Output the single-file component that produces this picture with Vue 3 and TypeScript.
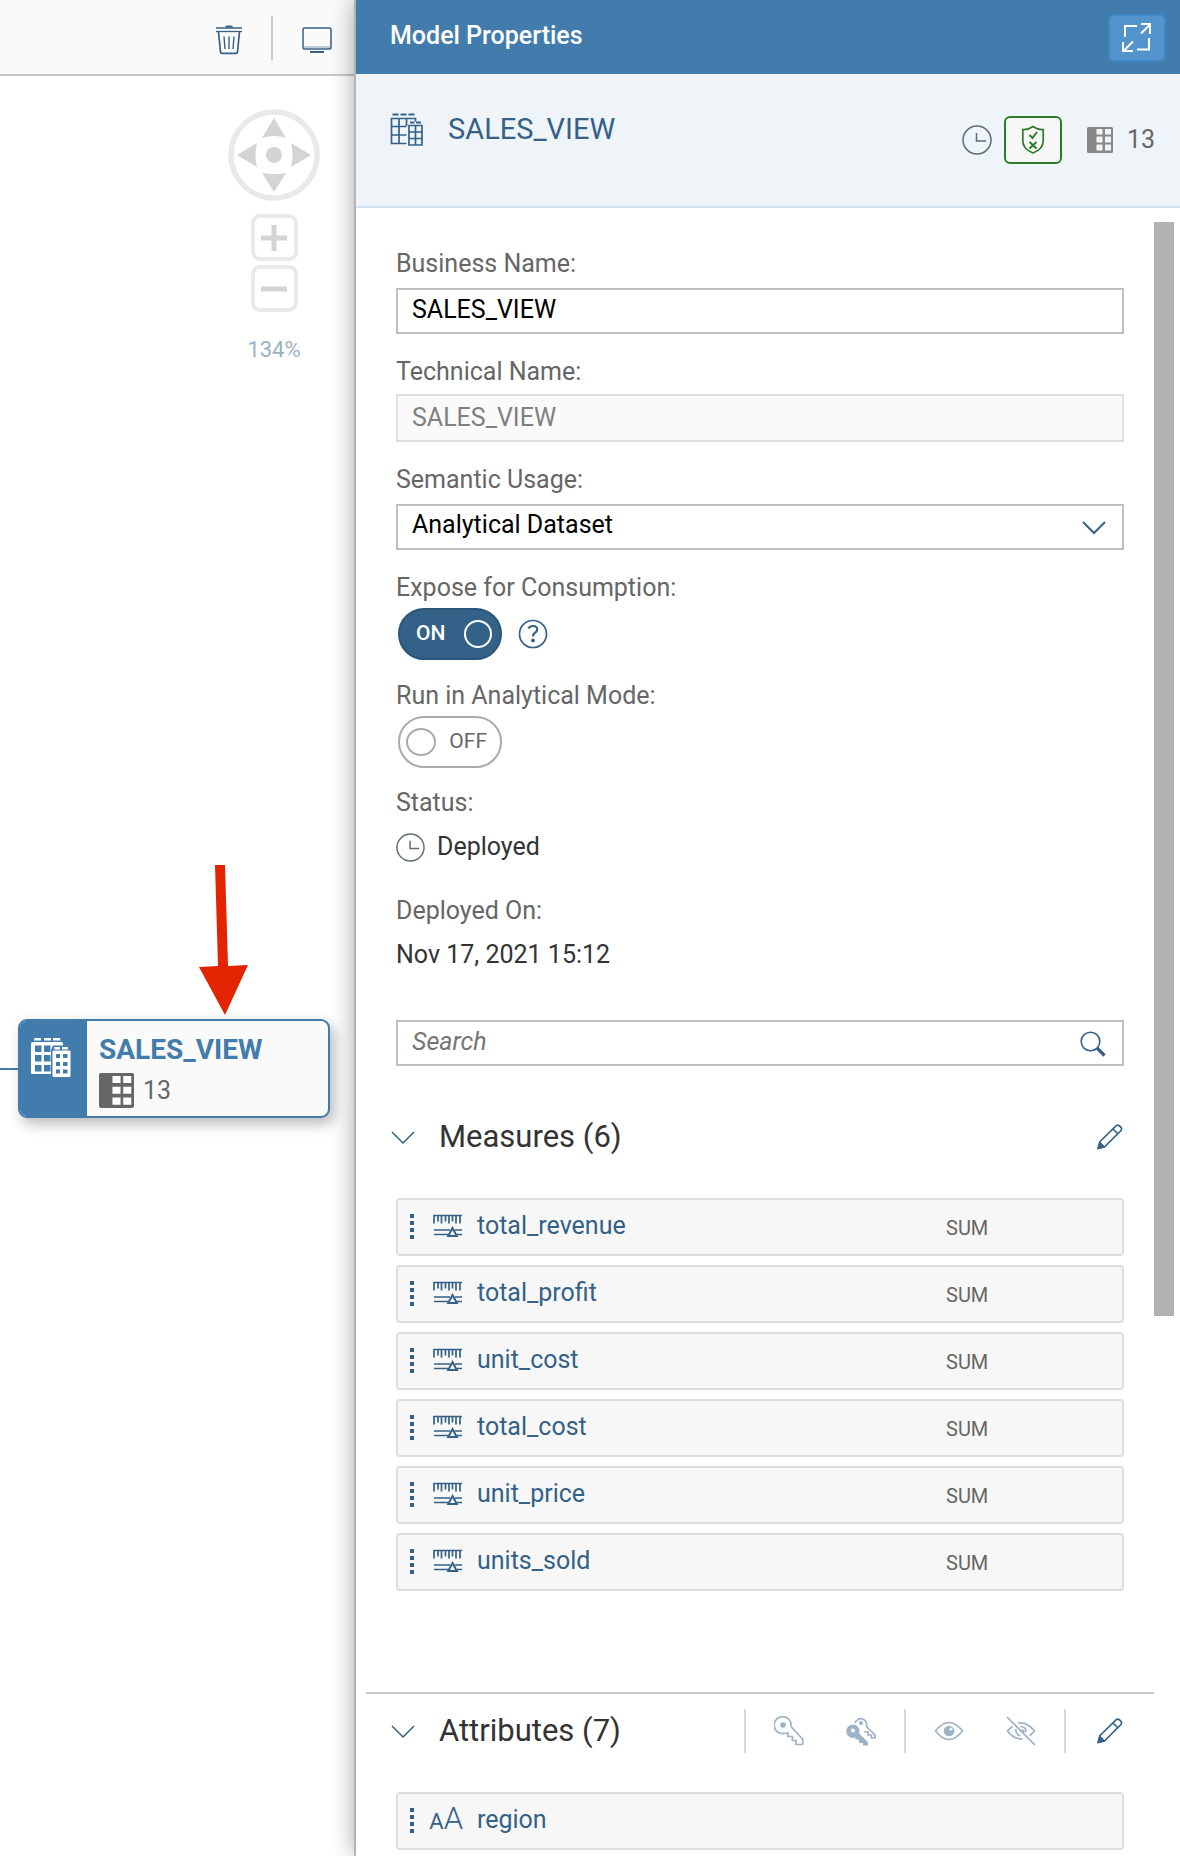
<script setup lang="ts">
import { ref } from 'vue'

interface Measure {
  name: string
  aggregation: string
}

const businessName = ref('SALES_VIEW')
const technicalName = 'SALES_VIEW'
const semanticUsage = ref('Analytical Dataset')
const exposed = ref(true)
const analyticalMode = ref(false)
const query = ref('')
const columnCount = 13

const measures: Measure[] = [
  { name: 'total_revenue', aggregation: 'SUM' },
  { name: 'total_profit', aggregation: 'SUM' },
  { name: 'unit_cost', aggregation: 'SUM' },
  { name: 'total_cost', aggregation: 'SUM' },
  { name: 'unit_price', aggregation: 'SUM' },
  { name: 'units_sold', aggregation: 'SUM' },
]

const attributes: string[] = ['region']
</script>

<template>
  <div class="app">
    <section class="workspace">
      <div class="toolbar">
        <button class="icon-btn" type="button" aria-label="Delete">
          <svg width="26" height="30" viewBox="0 0 26 30" fill="none" stroke="currentColor" stroke-width="1.4">
            <path d="M0 3h26" stroke-width="1.5" />
            <path d="M0 6.500h26" stroke-width="1.300" />
            <path d="M9 2.500q0-2 2-2h4q2 0 2 2z" fill="currentColor" stroke="none" />
            <path d="M2.500 7l2 20q.2 1.300 1.500 1.300h14q1.300 0 1.500-1.300l2-20" stroke-width="1.700" />
            <path d="M8 11.500l1 12.500M13 11.500V24M18 11.500l-1 12.500" />
          </svg>
        </button>
        <span class="toolbar-sep"></span>
        <button class="icon-btn" type="button" aria-label="Preview data">
          <svg width="30" height="28" viewBox="0 0 30 28" fill="none" stroke="currentColor" stroke-width="1.5">
            <rect x="1" y="2" width="28" height="21" rx="1.500" />
            <path d="M2 21h26" stroke-width="1" opacity=".6" />
            <path d="M8 26h14" stroke-width="2" />
          </svg>
        </button>
      </div>

      <div class="canvas">
        <div class="navigator">
          <svg width="92" height="92" viewBox="-46 -46 92 92" aria-label="Pan">
            <circle r="43" fill="none" stroke="#e9e9e9" stroke-width="5.500" />
            <g fill="#d4d4d4">
              <circle r="8" />
              <path d="M0-37L12-17Q0-21-12-17z" />
              <path d="M0 37L12 18Q0 20-12 18z" />
              <path d="M-37 0L-17-12Q-20 0-17 12z" />
              <path d="M37 0L17-12Q20 0 17 12z" />
            </g>
          </svg>
          <div class="zoom-buttons">
            <button class="zoom-btn" type="button" aria-label="Zoom in">
              <svg width="28" height="28" viewBox="0 0 28 28" stroke="#d4d4d4" stroke-width="5"><path d="M1 14h26M14 1v26" /></svg>
            </button>
            <button class="zoom-btn" type="button" aria-label="Zoom out">
              <svg width="28" height="28" viewBox="0 0 28 28" stroke="#d4d4d4" stroke-width="5"><path d="M1 14h26" /></svg>
            </button>
          </div>
          <span class="zoom-level">134%</span>
        </div>

        <svg class="pointer" width="52" height="154" viewBox="0 0 52 154" fill="#e32400">
          <path d="M18 1h10l3 101 20-1-23 50L2 103l19-1z" />
        </svg>
        <span class="edge"></span>
        <article class="node">
          <div class="node-badge">
            <svg width="40" height="41" viewBox="0 0 40 41">
              <g fill="#fff">
                <path d="M3.500 1h6.500v2.500H3M13 1h7v2.500h-7M22 1h7l.5 2.500H22" />
                <rect y="5" width="32" height="32" rx="1.500" />
              </g>
              <path d="M4 8.500h6.500V15H4zM13 8.500h6.500V15H13zM4 18h6.500v6.500H4zM13 18h6.500v6.500H13zM4 28h6.500v6.500H4zM13 28h6.500v6.500H13z" fill="#427cac" />
              <path d="M20 40V13l2-4.500h16V13H41v28H20z" fill="#427cac" />
              <path d="M23.500 10.500h5V12h-5M31 10.500h5.500V12H31" stroke="#fff" fill="#fff" />
              <rect x="21.500" y="13.500" width="18" height="26.500" rx="1" fill="#fff" />
              <path d="M25 17h4v4h-4zM32 17h4.500v4H32zM25 25h4v4h-4zM32 25h4.500v4H32zM25 32.500h4v4h-4zM32 32.500h4.500v4H32z" fill="#427cac" />
            </svg>
          </div>
          <div class="node-body">
            <h2 class="node-title">SALES_VIEW</h2>
            <div class="node-count">
              <svg width="35" height="35" viewBox="0 0 26 26">
                <rect width="26" height="26" rx="1.500" fill="#666" />
                <path d="M10 2.300h6v5.200h-6zM18 2.300h6v5.200h-6zM10 10.200h6v5.300h-6zM18 10.200h6v5.300h-6zM10 18.200h6v5.300h-6zM18 18.200h6v5.300h-6z" fill="#fff" />
              </svg>
              <span>{{ columnCount }}</span>
            </div>
          </div>
        </article>
      </div>
    </section>

    <aside class="panel">
      <header class="panel-header">
        <h1>Model Properties</h1>
        <button class="expand-btn" type="button" aria-label="Expand panel">
          <svg width="30" height="30" viewBox="0 0 30 30" fill="none" stroke="#fff" stroke-width="2">
            <path d="M3 14V3h12M27 15v11.500H15M19 1h9v10M28 1.500L19 10.500M1 19v9h10M1.500 28L11 18.500" />
          </svg>
        </button>
      </header>

      <div class="object-header">
        <div class="object-name">
          <svg width="34" height="34" viewBox="0 0 34 34" fill="none" stroke="currentColor" stroke-width="1.700">
            <path d="M2.500 1.500h6M10.500 1.500h6M18.500 1.500h6" stroke-width="2" />
            <path d="M16.500 30.500H1.500V5.500h24v3M1.500 13.500h15M1.500 22h15M9 5.500v25M16.500 5.500V13" />
            <path d="M20 9.500h4.500M26 9.500h5" stroke-width="2" />
            <path d="M19 12.500h13V32H19zM19 19h13M19 25.500h13M25.500 12.500V32" />
          </svg>
          <h2>SALES_VIEW</h2>
        </div>
        <div class="object-status">
          <svg class="clock" width="30" height="30" viewBox="0 0 30 30" fill="none" stroke="currentColor" stroke-width="1.500">
            <circle cx="15" cy="15" r="14" /><path d="M14.500 8v8H24" />
          </svg>
          <button class="validate-btn" type="button" aria-label="Validation status">
            <svg width="24" height="30" viewBox="0 0 24 30" fill="none" stroke="currentColor" stroke-width="1.700">
              <path d="M12 1.500Q7 5 1.800 4.500V16q0 8 10.200 12 10.200-4 10.200-12V4.500Q17 5 12 1.500z" />
              <path d="M8.500 10l3 3 4.500-6M8.500 17l7 6.500M15.500 17l-7 6.500" stroke-width="2" />
            </svg>
          </button>
          <svg width="26" height="26" viewBox="0 0 26 26">
            <rect width="26" height="26" rx="1.500" fill="#888" />
            <path d="M9.500 2h6v5.500h-6zM18 2h6v5.500h-6zM9.500 9.500h6v6h-6zM18 9.500h6v6h-6zM9.500 17.500h6v6h-6zM18 17.500h6v6h-6z" fill="#eff4f9" />
          </svg>
          <span class="column-count">{{ columnCount }}</span>
        </div>
      </div>

      <div class="panel-body">
        <div class="content">
          <form class="form" @submit.prevent>
            <div class="field">
              <label for="business-name">Business Name:</label>
              <div class="control"><input id="business-name" v-model="businessName" class="text-input" type="text" /></div>
            </div>
            <div class="field">
              <label for="technical-name">Technical Name:</label>
              <div class="control"><input id="technical-name" class="text-input" type="text" :value="technicalName" disabled /></div>
            </div>
            <div class="field">
              <label for="semantic-usage">Semantic Usage:</label>
              <div class="control select-wrap">
                <select id="semantic-usage" v-model="semanticUsage" class="text-input">
                  <option>Analytical Dataset</option>
                  <option>Relational Dataset</option>
                </select>
                <svg class="field-icon" width="24" height="14" viewBox="0 0 24 14" fill="none" stroke="currentColor" stroke-width="2"><path d="M1 1l11 11L23 1" /></svg>
              </div>
            </div>
            <div class="field">
              <label for="expose">Expose for Consumption:</label>
              <div class="control toggles">
                <span class="switch on">
                  <input id="expose" v-model="exposed" type="checkbox" role="switch" />
                  <span>ON</span><i class="knob"></i>
                </span>
                <button class="icon-btn" type="button" aria-label="Help">
                  <svg width="30" height="30" viewBox="0 0 30 30" fill="none" stroke="currentColor">
                    <circle cx="15" cy="15" r="13.500" stroke-width="1.700" />
                    <path d="M10.300 9.500q1.500-2.500 4.700-2.500 4.200 0 4.200 3.500 0 2-2.500 3.500-1.700 1-1.700 3.500" stroke-width="2.200" />
                    <circle cx="15" cy="21.500" r="1.500" fill="currentColor" />
                  </svg>
                </button>
              </div>
            </div>
            <div class="field">
              <label for="analytical-mode">Run in Analytical Mode:</label>
              <div class="control toggles">
                <span class="switch off">
                  <input id="analytical-mode" v-model="analyticalMode" type="checkbox" role="switch" />
                  <i class="knob"></i><span>OFF</span>
                </span>
              </div>
            </div>
            <div class="field">
              <span class="caption">Status:</span>
              <div class="value">
                <svg class="clock" width="29" height="29" viewBox="0 0 30 30" fill="none" stroke="currentColor" stroke-width="1.500">
                  <circle cx="15" cy="15" r="14" /><path d="M14.500 8v8H24" />
                </svg>
                <span>Deployed</span>
              </div>
            </div>
            <div class="field">
              <span class="caption">Deployed On:</span>
              <div class="value">Nov 17, 2021 15:12</div>
            </div>
            <div class="search">
              <input v-model="query" class="text-input" type="search" placeholder="Search" aria-label="Search" />
              <svg class="field-icon" width="26" height="26" viewBox="0 0 26 26" fill="none" stroke="currentColor">
                <circle cx="10.500" cy="10.500" r="9.300" stroke-width="1.600" /><path d="M17 17l7.500 7.500" stroke-width="3.200" />
              </svg>
            </div>
          </form>

          <section class="group">
            <div class="group-header">
              <button class="collapse-btn" type="button" aria-label="Collapse measures">
                <svg width="24" height="14" viewBox="0 0 24 14" fill="none" stroke="currentColor" stroke-width="1.500"><path d="M1 1l11 11L23 1" /></svg>
              </button>
              <h3>Measures (6)</h3>
              <button class="icon-btn" type="button" aria-label="Edit measures">
                <svg width="28" height="28" viewBox="0 0 28 28" fill="none" stroke="currentColor" stroke-width="1.700">
                  <path d="M3.500 19L20.500 2.500q1.500-1 3 .3l1.500 1.500q1.200 1.500.2 3L8.500 24M17 6l5 5" /><path d="M3.500 18.500l5.500 5.700L1.500 26z" fill="currentColor" stroke-width="1" />
                </svg>
              </button>
            </div>
            <ul class="list">
              <li v-for="measure in measures" :key="measure.name" class="row">
                <span class="handle"></span>
                <svg class="row-icon" width="30" height="24" viewBox="0 0 30 24" fill="none" stroke="currentColor" stroke-width="1.700">
                  <path d="M1 9.500V1.500h28M5 1v6.500M8.500 1v8.500M12.500 1v6.500M16 1v8.500M19.500 1v6.500M23 1v8.500M27 1v8.500" />
                  <path d="M1 16h16M22 16h7M1 20.500h14.500M24 20.500h5" />
                  <path d="M19.500 14l4.300 8h-8.600z" stroke-width="2" />
                </svg>
                <a class="row-name" href="#">{{ measure.name }}</a>
                <span class="aggregation">{{ measure.aggregation }}</span>
              </li>
            </ul>
          </section>

          <section class="group ruled">
            <div class="group-header">
              <button class="collapse-btn" type="button" aria-label="Collapse attributes">
                <svg width="24" height="14" viewBox="0 0 24 14" fill="none" stroke="currentColor" stroke-width="1.500"><path d="M1 1l11 11L23 1" /></svg>
              </button>
              <h3>Attributes (7)</h3>
              <div class="actions">
                <span class="sep"></span>
                <button type="button" disabled aria-label="Set as key">
                  <svg width="30" height="30" viewBox="0 0 30 30" fill="none" stroke="currentColor" stroke-width="1.700">
                    <path d="M17 10.500L28 22.500q1.500 2 .5 6H22v-4h-3.500v-4H14V17l-4 .5a8.500 8.500 0 1 1 7-7" /><circle cx="9" cy="9" r="2.800" fill="currentColor" stroke="none" />
                  </svg>
                </button>
                <button type="button" disabled aria-label="Set compound key">
                  <svg width="30" height="30" viewBox="0 0 30 30" fill="none" stroke="currentColor" stroke-width="1.700">
                    <path d="M9 7a6 6 0 1 1 11.500 3.500l8 8q1 1.500.5 3.500h-3.500v-3H22v-3h-4" /><circle cx="15" cy="7" r="2" fill="currentColor" stroke="none" />
                    <path fill="currentColor" fill-rule="evenodd" stroke="none" d="M7 8.500a6.500 6.500 0 0 1 6 9l9 8.500v3.500h-5V27h-4v-3.500H9.500v-2L7 22a6.500 6.500 0 0 1 0-13.500zm0 4a2 2 0 1 0 0 4 2 2 0 0 0 0-4z" />
                  </svg>
                </button>
                <span class="sep"></span>
                <button type="button" disabled aria-label="Show">
                  <svg width="30" height="30" viewBox="0 0 30 30" fill="none" stroke="currentColor" stroke-width="1.700">
                    <path d="M1.500 15q13.500-17 27 0-13.500 17-27 0z" /><circle cx="15" cy="15" r="5.300" fill="currentColor" stroke="none" /><circle cx="17" cy="13" r="1.500" fill="#fff" stroke="none" />
                  </svg>
                </button>
                <button type="button" disabled aria-label="Hide">
                  <svg width="30" height="30" viewBox="0 0 30 30" fill="none" stroke="currentColor" stroke-width="1.700">
                    <path d="M1 1l28 28M6.500 10.500Q4 12 1.500 15q6.500 8.500 15 8M12 7q9-1.500 16.500 8-2.500 3-5 4.700M10 13q-1 5 4.500 7M14 10.500q6 0 6 5.500M16 13.500l2.500 3" />
                  </svg>
                </button>
                <span class="sep"></span>
              </div>
              <button class="icon-btn" type="button" aria-label="Edit attributes">
                <svg width="28" height="28" viewBox="0 0 28 28" fill="none" stroke="currentColor" stroke-width="1.700">
                  <path d="M3.500 19L20.500 2.500q1.500-1 3 .3l1.500 1.500q1.200 1.500.2 3L8.500 24M17 6l5 5" /><path d="M3.500 18.500l5.500 5.700L1.500 26z" fill="currentColor" stroke-width="1" />
                </svg>
              </button>
            </div>
            <ul class="list">
              <li v-for="name in attributes" :key="name" class="row">
                <span class="handle"></span>
                <span class="type-icon" aria-hidden="true"><small>A</small><span>A</span></span>
                <a class="row-name" href="#">{{ name }}</a>
              </li>
            </ul>
          </section>
        </div>
        <div class="scroll-thumb"></div>
      </div>
    </aside>
  </div>
</template>

<style>
body {
  margin: 0;
  background: #fff;
}
</style>

<style scoped>
.app,
.app * {
  box-sizing: border-box;
}

.app {
  display: flex;
  min-height: 100vh;
  overflow: hidden;
  font-family: Roboto, "Liberation Sans", sans-serif;
  font-size: 25px;
  line-height: 30px;
  color: #333;
}

h1,
h2,
h3,
ul {
  margin: 0;
  padding: 0;
  font-size: inherit;
  font-weight: 400;
}

button {
  padding: 0;
  border: 0;
  background: none;
  font: inherit;
  color: #346187;
  cursor: pointer;
}

svg {
  display: block;
  flex-shrink: 0;
}

/* Workspace */
.workspace {
  display: flex;
  flex: 0 0 354px;
  flex-direction: column;
}

.toolbar {
  display: flex;
  align-items: center;
  justify-content: flex-end;
  gap: 29px;
  height: 76px;
  padding: 2px 22px 0 0;
  border-bottom: 2px solid #c8c8c8;
  background: #fafafa;
}

.toolbar .icon-btn {
  padding-top: 4px;
}

.toolbar-sep {
  width: 2px;
  height: 44px;
  background: #ccc;
}

.canvas {
  position: relative;
  flex: 1;
}

.navigator {
  display: flex;
  flex-direction: column;
  align-items: center;
  width: 92px;
  margin: 33px 34px 0 auto;
}

.zoom-buttons {
  display: flex;
  flex-direction: column;
  gap: 4px;
  margin: 13px 0 23px;
}

.zoom-btn {
  display: flex;
  align-items: center;
  justify-content: center;
  width: 47px;
  height: 47px;
  border: 4px solid #e9e9e9;
  border-radius: 9px;
}

.zoom-level {
  font-size: 22px;
  color: #9ab0c4;
}

.pointer {
  position: absolute;
  left: 197px;
  top: 788px;
}

.edge {
  position: absolute;
  left: 0;
  top: 992px;
  width: 18px;
  height: 2px;
  background: #427cac;
}

.node {
  position: absolute;
  left: 18px;
  top: 943px;
  display: flex;
  width: 312px;
  height: 99px;
  overflow: hidden;
  border: 2px solid #427cac;
  border-radius: 9px;
  background: #fafafa;
  box-shadow: 4px 6px 14px rgba(0, 0, 0, 0.28);
}

.node-badge {
  width: 67px;
  padding: 16px 0 0 11px;
  background: #427cac;
}

.node-body {
  padding: 14px 0 0 12px;
}

.node-title {
  font-size: 28px;
  font-weight: 700;
  color: #427cac;
}

.node-count {
  display: flex;
  align-items: center;
  gap: 9px;
  margin-top: 8px;
  color: #666;
}

/* Panel */
.panel {
  position: relative;
  flex: 1;
  min-width: 0;
  border-left: 2px solid #b3b3b3;
  background: #fff;
  box-shadow: 0 0 22px rgba(0, 0, 0, 0.35);
}

.panel-header {
  display: flex;
  align-items: center;
  justify-content: space-between;
  height: 74px;
  padding: 2px 14px 0 34px;
  background: #427cac;
}

.panel-header h1 {
  padding-bottom: 4px;
  font-weight: 500;
  color: #fff;
}

.expand-btn {
  display: flex;
  align-items: center;
  justify-content: center;
  width: 58px;
  height: 48px;
  border: 2px solid #3f87c7;
  border-radius: 6px;
  background: #5494cc;
}

.object-header {
  display: flex;
  align-items: flex-start;
  justify-content: space-between;
  height: 134px;
  padding: 39px 25px 0 34px;
  border-bottom: 2px solid #d3e2f0;
  background: #eff4f9;
  color: #346187;
}

.object-name,
.object-status {
  display: flex;
  align-items: center;
}

.object-name {
  gap: 24px;
}

.object-name h2 {
  padding-bottom: 2px;
  font-size: 29px;
}

.object-status {
  padding-top: 3px;
}

.clock {
  color: #5f6c74;
}

.validate-btn {
  display: flex;
  align-items: center;
  justify-content: center;
  width: 58px;
  height: 48px;
  margin: 0 25px 0 12px;
  border: 2px solid #2b7d2b;
  border-radius: 6px;
  background: #f7f7f7;
  color: #2b7d2b;
}

.column-count {
  margin-left: 14px;
  color: #666;
}

.panel-body {
  display: flex;
  align-items: flex-start;
  padding: 14px 6px 0 10px;
}

.content {
  flex: 1;
  min-width: 0;
}

.scroll-thumb {
  width: 20px;
  height: 1094px;
  background: #b1b1b1;
}

.form {
  padding: 26px 30px 0;
}

.field {
  min-height: 108px;
}

.field label,
.caption {
  display: block;
  color: #666;
}

.field label {
  padding-top: 1px;
}

.control {
  display: flex;
  align-items: center;
  height: 52px;
  margin-top: 5px;
}

.text-input {
  width: 100%;
  height: 46px;
  margin: 2px 0 0;
  padding: 0 15px 4px 14px;
  border: 2px solid #bfbfbf;
  border-radius: 0;
  outline: 0;
  appearance: none;
  background: #fff;
  font: inherit;
  color: #000;
}

.text-input:disabled {
  height: 48px;
  margin-top: 0;
  padding-bottom: 2px;
  border-color: #dedede;
  background: #fafafa;
  color: #808080;
}

.text-input::placeholder {
  font-style: italic;
  color: #757575;
  opacity: 1;
}

.select-wrap,
.search {
  position: relative;
  display: flex;
  align-items: center;
  color: #346187;
}

.search {
  margin-top: 14px;
}

.field-icon {
  position: absolute;
  right: 18px;
  margin-top: 4px;
  pointer-events: none;
}

.toggles {
  gap: 16px;
  padding-left: 2px;
}

.switch {
  position: relative;
  display: flex;
  align-items: center;
  justify-content: space-between;
  width: 104px;
  height: 52px;
  border: 2px solid #aaa;
  border-radius: 26px;
  font-size: 21px;
  color: #666;
}

.switch > span {
  padding-bottom: 2px;
}

.switch input {
  position: absolute;
  inset: 0;
  width: 100%;
  height: 100%;
  margin: 0;
  appearance: none;
  cursor: pointer;
}

.switch.on {
  padding: 0 8px 0 16px;
  border-color: #2c5679;
  background: #346187;
  font-weight: 500;
  color: #fff;
}

.switch.off {
  padding: 0 13px 0 6px;
}

.knob {
  width: 28px;
  height: 28px;
  border: 2px solid currentColor;
  border-radius: 50%;
}

.off .knob {
  width: 30px;
  border-color: #aaa;
}

.value {
  display: flex;
  align-items: center;
  gap: 12px;
  min-height: 58px;
}

/* Measures and attributes */
.group {
  padding: 41px 30px 0;
}

.group.ruled {
  margin-top: 101px;
  padding-top: 7px;
  border-top: 2px solid #c8c8c8;
}

.group-header {
  display: flex;
  align-items: center;
  height: 60px;
  margin-bottom: 31px;
}

.group-header h3 {
  flex: 1;
  font-size: 31px;
}

.collapse-btn {
  width: 24px;
  margin: 2px 24px 0 -5px;
}

.actions {
  display: flex;
  align-items: center;
  margin-right: 30px;
}

.actions button {
  display: flex;
  justify-content: center;
  width: 72px;
  color: #9cb2c6;
}

.sep {
  width: 2px;
  height: 44px;
  margin: 0 7px;
  background: #d5dadd;
}

.sep:last-child {
  margin-right: 0;
}

.list {
  display: flex;
  flex-direction: column;
  gap: 9px;
  list-style: none;
}

.row {
  display: flex;
  align-items: center;
  height: 58px;
  padding: 0 0 2px 12px;
  border: 2px solid #dedede;
  border-radius: 4px;
  background: #f7f7f7;
  color: #346187;
}

.handle {
  width: 4px;
  height: 25px;
  background: repeating-linear-gradient(#346187 0 4px, transparent 4px 7px);
}

.row-icon {
  margin-left: 19px;
}

.type-icon {
  display: flex;
  align-items: baseline;
  justify-content: flex-end;
  width: 32px;
  margin-left: 17px;
  font-size: 31px;
  font-weight: 300;
}

.type-icon small {
  font-size: 22px;
  font-weight: 400;
}

.row-name {
  flex: 1;
  margin-left: 14px;
  color: inherit;
  text-decoration: none;
}

.aggregation {
  width: 176px;
  padding-top: 4px;
  font-size: 20px;
  color: #666;
}
</style>
